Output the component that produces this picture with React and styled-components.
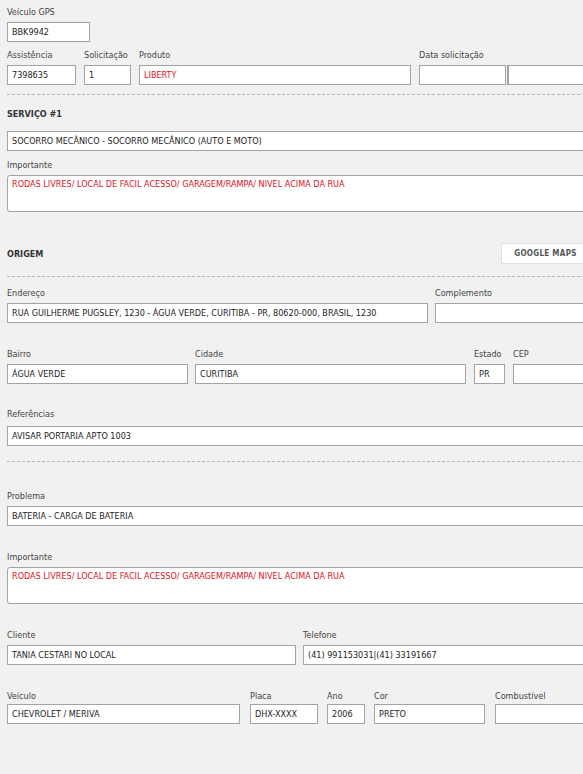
import React from "react"
import styled, { createGlobalStyle } from "styled-components"

const GlobalStyle = createGlobalStyle`
body {
  margin: 0;
  background: #f1f1f1;
  overflow: hidden;
  font-family: Tahoma, "DejaVu Sans Condensed", "DejaVu Sans", "Liberation Sans", sans-serif;
  font-stretch: semi-condensed;
}
`

const Page = styled.div`
width: 583px;
padding: 6px 7px 40px 7px;
display: flex;
flex-direction: column;
`

const Row = styled.div`
display: flex;
align-items: flex-end;
margin-top: ${p => p.mt || 0}px;
`

const Field = styled.div`
display: flex;
flex-direction: column;
width: ${p => (p.w ? p.w + "px" : "auto")};
flex: ${p => (p.w ? "none" : "1")};
margin-right: ${p => p.mr || 0}px;
`

const Label = styled.label`
font-size: 9px;
line-height: 12px;
color: #444;
margin-bottom: ${p => p.gap || 4}px;
white-space: nowrap;
`

const Input = styled.div`
box-sizing: border-box;
height: 20px;
background: #fff;
border: 1px solid #a3a3a3;
border-left-width: ${p => p.thick ? 2 : 1}px;
padding: 0 4px;
display: flex;
align-items: center;
font-size: 9px;
color: ${p => (p.red ? "#e0101a" : "#222")};
white-space: nowrap;
overflow: hidden;
`

const TextArea = styled.div`
box-sizing: border-box;
height: 37px;
background: #fff;
border: 1px solid #a3a3a3;
border-radius: 3px;
padding: 3px 4px;
font-size: 9px;
line-height: 11px;
color: #e0101a;
`

const Divider = styled.hr`
border: none;
border-top: 1px dashed #b5b5b5;
margin: ${p => p.mt || 0}px 0 0 0;
height: 0;
`

const SectionHead = styled.div`
display: flex;
justify-content: space-between;
align-items: center;
margin-top: ${p => p.mt || 0}px;
`

const Title = styled.div`
font-size: 9px;
font-weight: bold;
color: #333;
line-height: 12px;
`

const MapsButton = styled.button`
box-sizing: border-box;
height: 21px;
width: 89px;
background: #fff;
border: 1px solid #e0e0e0;
font-family: inherit;
font-stretch: inherit;
font-size: 8px;
font-weight: bold;
letter-spacing: 0.3px;
color: #555;
text-align: center;
padding: 0;
white-space: nowrap;
`

export default function App() {
  return (
    <>
      <GlobalStyle />
      <Page>
        <Row>
          <Field w={83}>
            <Label>Veículo GPS</Label>
            <Input>BBK9942</Input>
          </Field>
        </Row>

        <Row mt={7}>
          <Field w={69} mr={8}>
            <Label>Assistência</Label>
            <Input>7398635</Input>
          </Field>
          <Field w={47} mr={8}>
            <Label>Solicitação</Label>
            <Input>1</Input>
          </Field>
          <Field w={272} mr={8}>
            <Label>Produto</Label>
            <Input red>LIBERTY</Input>
          </Field>
          <Field w={87} mr={1}>
            <Label>Data solicitação</Label>
            <Input></Input>
          </Field>
          <Field>
            <Input thick></Input>
          </Field>
        </Row>

        <Divider mt={9} />

        <SectionHead mt={13}>
          <Title>SERVIÇO #1</Title>
        </SectionHead>

        <Row mt={11}>
          <Field>
            <Input>SOCORRO MECÂNICO - SOCORRO MECÂNICO (AUTO E MOTO)</Input>
          </Field>
        </Row>

        <Row mt={8}>
          <Field>
            <Label gap={4}>Importante</Label>
            <TextArea>RODAS LIVRES/ LOCAL DE FACIL ACESSO/ GARAGEM/RAMPA/ NIVEL ACIMA DA RUA</TextArea>
          </Field>
        </Row>

        <SectionHead mt={31}>
          <Title>ORIGEM</Title>
          <MapsButton>GOOGLE MAPS</MapsButton>
        </SectionHead>

        <Divider mt={12} />

        <Row mt={10}>
          <Field w={421} mr={7}>
            <Label>Endereço</Label>
            <Input>RUA GUILHERME PUGSLEY, 1230 - ÁGUA VERDE, CURITIBA - PR, 80620-000, BRASIL, 1230</Input>
          </Field>
          <Field>
            <Label>Complemento</Label>
            <Input></Input>
          </Field>
        </Row>

        <Row mt={25}>
          <Field w={181} mr={7}>
            <Label>Bairro</Label>
            <Input>ÁGUA VERDE</Input>
          </Field>
          <Field w={271} mr={8}>
            <Label>Cidade</Label>
            <Input>CURITIBA</Input>
          </Field>
          <Field w={31} mr={8}>
            <Label>Estado</Label>
            <Input>PR</Input>
          </Field>
          <Field>
            <Label>CEP</Label>
            <Input></Input>
          </Field>
        </Row>

        <Row mt={24}>
          <Field>
            <Label gap={6}>Referências</Label>
            <Input>AVISAR PORTARIA APTO 1003</Input>
          </Field>
        </Row>

        <Divider mt={15} />

        <Row mt={28}>
          <Field>
            <Label>Problema</Label>
            <Input>BATERIA - CARGA DE BATERIA</Input>
          </Field>
        </Row>

        <Row mt={25}>
          <Field>
            <Label>Importante</Label>
            <TextArea>RODAS LIVRES/ LOCAL DE FACIL ACESSO/ GARAGEM/RAMPA/ NIVEL ACIMA DA RUA</TextArea>
          </Field>
        </Row>

        <Row mt={25}>
          <Field w={289} mr={7}>
            <Label>Cliente</Label>
            <Input>TANIA CESTARI NO LOCAL</Input>
          </Field>
          <Field>
            <Label>Telefone</Label>
            <Input>(41) 991153031|(41) 33191667</Input>
          </Field>
        </Row>

        <Row mt={25}>
          <Field w={233} mr={10}>
            <Label gap={2}>Veículo</Label>
            <Input>CHEVROLET / MERIVA</Input>
          </Field>
          <Field w={68} mr={9}>
            <Label gap={2}>Placa</Label>
            <Input>DHX-XXXX</Input>
          </Field>
          <Field w={38} mr={9}>
            <Label gap={2}>Ano</Label>
            <Input>2006</Input>
          </Field>
          <Field w={111} mr={10}>
            <Label gap={2}>Cor</Label>
            <Input>PRETO</Input>
          </Field>
          <Field>
            <Label gap={2}>Combustível</Label>
            <Input></Input>
          </Field>
        </Row>
      </Page>
    </>
  )
}
